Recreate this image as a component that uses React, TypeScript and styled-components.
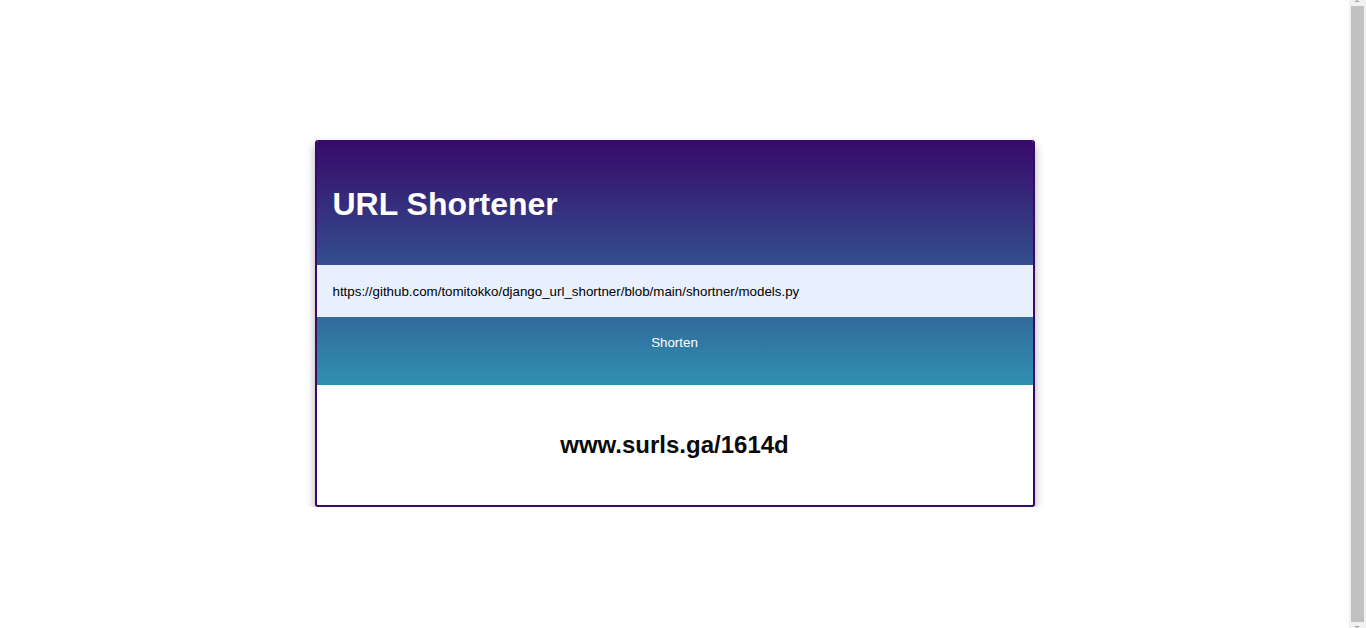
import React from "react";
import styled, { createGlobalStyle } from "styled-components";

const Global = createGlobalStyle`
  html { height: 100%; }
  body {
    margin: 8px;
    background: #ffffff;
    font-family: "Liberation Sans", Arial, sans-serif;
  }
`;

const Page = styled.main`
  display: flex;
  justify-content: center;
  padding-top: 132px;
  margin-right: 17px;
`;

const ScrollTrack = styled.div`
  position: fixed;
  top: 0;
  right: 0;
  width: 17px;
  height: 100vh;
  background: #f1f1f1;
  z-index: 10;
`;

const ScrollThumb = styled.div`
  position: absolute;
  top: 6px;
  bottom: 6px;
  left: 2px;
  right: 2px;
  background: #c1c1c1;
`;

const ScrollArrow = styled.div<{ $down?: boolean }>`
  position: absolute;
  left: 5px;
  ${(p) => (p.$down ? "bottom: 0;" : "top: 0;")}
  width: 0;
  height: 0;
  border-left: 3.5px solid transparent;
  border-right: 3.5px solid transparent;
  ${(p) =>
    p.$down
      ? "border-top: 2px solid #a3a3a3;"
      : "border-bottom: 2px solid #a3a3a3;"}
`;

const Card = styled.section`
  width: 720px;
  box-sizing: border-box;
  border: 2px solid #360a6a;
  border-top-width: 1px;
  border-radius: 3px;
  overflow: hidden;
  display: flex;
  flex-direction: column;
  box-shadow: 0 5px 10px rgba(0, 0, 0, 0.33);
  background: #ffffff;
`;

const Form = styled.form`
  display: flex;
  flex-direction: column;
  background: linear-gradient(180deg, #370a6a 0%, #3090b0 100%);
`;

const Header = styled.header`
  height: 124px;
  box-sizing: border-box;
  display: flex;
  align-items: center;
  padding: 2px 16px 0;
`;

const Title = styled.h1`
  margin: 0;
  color: #ffffff;
  font-size: 32px;
  font-weight: 700;
  font-family: "Liberation Sans", Arial, sans-serif;
`;

const UrlInput = styled.input`
  height: 52px;
  box-sizing: border-box;
  border: none;
  outline: none;
  padding: 0 16px;
  background: #e8f0fe;
  color: #000000;
  font-family: "Liberation Sans", Arial, sans-serif;
  font-size: 13.33px;
`;

const Button = styled.button`
  height: 68px;
  border: none;
  background: transparent;
  color: #ffffff;
  font-family: "Liberation Sans", Arial, sans-serif;
  font-size: 13.33px;
  display: flex;
  justify-content: center;
  align-items: flex-start;
  padding: 18px 0 0;
  cursor: pointer;
`;

const Result = styled.div`
  height: 120px;
  display: flex;
  align-items: center;
  justify-content: center;
`;

const ShortUrl = styled.h2`
  margin: 0;
  font-size: 24px;
  font-weight: 700;
  color: #0a0a0a;
  font-family: "Liberation Sans", Arial, sans-serif;
`;

export default function App() {
  return (
    <>
      <Global />
      <Page>
        <Card>
          <Form onSubmit={(e) => e.preventDefault()}>
            <Header>
              <Title>URL Shortener</Title>
            </Header>
            <UrlInput
              type="text"
              defaultValue="https://github.com/tomitokko/django_url_shortner/blob/main/shortner/models.py"
            />
            <Button type="submit">Shorten</Button>
          </Form>
          <Result>
            <ShortUrl>www.surls.ga/1614d</ShortUrl>
          </Result>
        </Card>
      </Page>
      <ScrollTrack aria-hidden="true">
        <ScrollArrow />
        <ScrollThumb />
        <ScrollArrow $down />
      </ScrollTrack>
    </>
  );
}
